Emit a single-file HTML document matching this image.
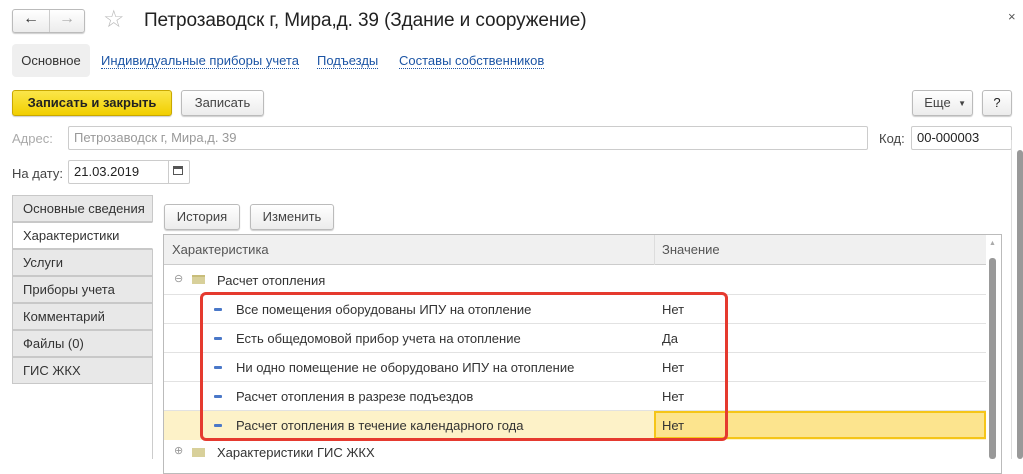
<!DOCTYPE html>
<html><head><meta charset="utf-8"><style>
*{box-sizing:border-box;margin:0;padding:0}
body{width:1023px;height:459px;overflow:hidden;background:#fff;font-family:"Liberation Sans",Arial,sans-serif;font-size:13px;color:#333;position:relative}
.a{position:absolute}
.btn{position:absolute;border:1px solid #bbb;border-radius:3px;background:linear-gradient(#fff,#ececec);box-shadow:0 1px 1px #ccc;text-align:center;color:#444}
.link{position:absolute;color:#1c55a5;border-bottom:1px dotted #1c55a5;line-height:14px}
.inp{position:absolute;border:1px solid #ccc;border-radius:2px;height:24px;line-height:22px;padding-left:5px}
.tab{position:absolute;left:12px;width:141px;height:27px;background:#e8e8e8;border:1px solid #c8c8c8;line-height:25px;padding-left:10px;color:#333}
.row{position:absolute;left:164px;width:822px;height:29px;border-bottom:1px solid #e2e2e2}
.row span{position:absolute;top:7px}
.dash{position:absolute;left:50px;top:13px;width:8px;height:3px;background:#4a78c8;border-radius:1px}
</style></head><body>
<div class="btn" style="left:12px;top:9px;width:73px;height:24px;border-radius:3px"></div>
<div class="a" style="left:49px;top:10px;width:1px;height:22px;background:#ccc"></div>
<div class="a" style="left:23px;top:10px;font-size:16px;color:#333;font-weight:bold">&#8592;</div>
<div class="a" style="left:59px;top:10px;font-size:16px;color:#aaa;font-weight:bold">&#8594;</div>
<div class="a" style="left:103px;top:5px;font-size:24px;color:#bbb">&#9734;</div>
<div class="a" style="left:144px;top:10px;font-size:19px;color:#222;letter-spacing:-0.1px">Петрозаводск г, Мира,д. 39 (Здание и сооружение)</div>
<div class="a" style="left:1008px;top:9px;font-size:13px;color:#555">×</div>

<div class="a" style="left:12px;top:44px;width:78px;height:33px;background:#efefef;border-radius:4px;line-height:33px;text-align:center;color:#333">Основное</div>
<div class="link" style="left:101px;top:54px">Индивидуальные приборы учета</div>
<div class="link" style="left:317px;top:54px">Подъезды</div>
<div class="link" style="left:399px;top:54px">Составы собственников</div>

<div class="btn" style="left:12px;top:90px;width:160px;height:26px;line-height:24px;background:linear-gradient(#fbe64a,#f1cf00);border-color:#c9a800;color:#222;font-weight:bold">Записать и закрыть</div>
<div class="btn" style="left:181px;top:90px;width:83px;height:26px;line-height:24px">Записать</div>
<div class="btn" style="left:912px;top:90px;width:61px;height:26px;line-height:24px;padding-right:10px">Еще <span style="font-size:8px;position:absolute;right:6px;top:1px">▼</span></div>
<div class="btn" style="left:982px;top:90px;width:30px;height:26px;line-height:24px;color:#222">?</div>

<div class="a" style="left:12px;top:131px;color:#aaa">Адрес:</div>
<div class="inp" style="left:68px;top:126px;width:800px;color:#999">Петрозаводск г, Мира,д. 39</div>
<div class="a" style="left:879px;top:131px;color:#444">Код:</div>
<div class="inp" style="left:911px;top:126px;width:101px;color:#222">00-000003</div>

<div class="a" style="left:12px;top:166px;color:#444">На дату:</div>
<div class="inp" style="left:68px;top:160px;width:122px;color:#222">21.03.2019</div>
<div class="a" style="left:168px;top:161px;width:1px;height:22px;background:#ccc"></div>
<div class="a" style="left:173px;top:166px;width:10px;height:9px;border:1px solid #555;border-top-width:3px"></div>

<div class="a" style="left:152px;top:195px;width:1px;height:264px;background:#ccc"></div>
<div class="tab" style="top:195px">Основные сведения</div>
<div class="tab" style="top:222px;background:#fff;border-right-color:#fff">Характеристики</div>
<div class="tab" style="top:249px">Услуги</div>
<div class="tab" style="top:276px">Приборы учета</div>
<div class="tab" style="top:303px">Комментарий</div>
<div class="tab" style="top:330px">Файлы (0)</div>
<div class="tab" style="top:357px">ГИС ЖКХ</div>

<div class="btn" style="left:164px;top:204px;width:76px;height:26px;line-height:24px">История</div>
<div class="btn" style="left:250px;top:204px;width:84px;height:26px;line-height:24px">Изменить</div>

<div class="a" style="left:163px;top:234px;width:839px;height:240px;border:1px solid #bbb"></div>
<div class="a" style="left:164px;top:235px;width:822px;height:30px;background:#f0f0f0;border-bottom:1px solid #ccc"></div>
<div class="a" style="left:172px;top:242px;color:#555">Характеристика</div>
<div class="a" style="left:654px;top:235px;width:1px;height:30px;background:#ddd"></div>
<div class="a" style="left:662px;top:242px;color:#555">Значение</div>
<div class="a" style="left:989px;top:240px;font-size:7px;color:#aaa">▲</div>
<div class="a" style="left:989px;top:258px;width:7px;height:201px;background:#999;border-radius:3px"></div>

<div class="row" style="top:266px"><span style="left:10px;top:6px;font-size:11px;color:#999">⊖</span><span style="left:28px;top:9px;width:13px;height:9px;background:#d8d09a;border-top:2px solid #c8bd7a"></span><span style="left:53px">Расчет отопления</span></div>
<div class="row" style="top:295px"><div class="dash"></div><span style="left:72px">Все помещения оборудованы ИПУ на отопление</span><span style="left:498px">Нет</span></div>
<div class="row" style="top:324px"><div class="dash"></div><span style="left:72px">Есть общедомовой прибор учета на отопление</span><span style="left:498px">Да</span></div>
<div class="row" style="top:353px"><div class="dash"></div><span style="left:72px">Ни одно помещение не оборудовано ИПУ на отопление</span><span style="left:498px">Нет</span></div>
<div class="row" style="top:382px"><div class="dash"></div><span style="left:72px">Расчет отопления в разрезе подъездов</span><span style="left:498px">Нет</span></div>
<div class="row" style="top:411px;background:#fdf2c8;border:none"><div class="dash"></div><span style="left:72px">Расчет отопления в течение календарного года</span></div>
<div class="a" style="left:654px;top:411px;width:332px;height:28px;background:#fce48e;border:2px solid #f5c518;padding:5px 0 0 6px">Нет</div>
<div class="row" style="top:440px;border:none"><span style="left:10px;top:4px;font-size:11px;color:#999">⊕</span><span style="left:28px;top:8px;width:13px;height:9px;background:#d8d09a"></span><span style="left:53px;top:5px">Характеристики ГИС ЖКХ</span></div>

<div class="a" style="left:200px;top:292px;width:528px;height:149px;border:3px solid #e53a2f;border-radius:6px"></div>

<div class="a" style="left:1011px;top:140px;width:1px;height:319px;background:#ddd"></div>
<div class="a" style="left:1017px;top:150px;width:6px;height:309px;background:#999;border-radius:3px"></div>
</body></html>
